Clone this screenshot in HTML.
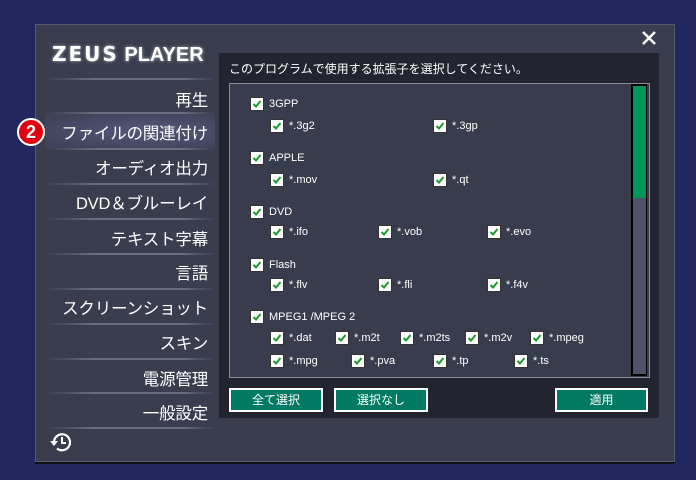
<html><head><style>
body{margin:0;width:696px;height:480px;background:#20285f;position:relative;overflow:hidden;font-family:"Liberation Sans","Noto Sans CJK JP",sans-serif;color:#fff}
.win{position:absolute;left:35px;top:24px;width:638px;height:436px;background:#3a3d4e;border:1px solid #555a70;box-shadow:0 2px 0 #111}
.logo{position:absolute;left:52px;top:42px;font-size:20px;font-weight:bold;letter-spacing:0px;text-shadow:0 0 3px rgba(255,255,255,.6);white-space:nowrap}
.logo b{letter-spacing:2px;font-family:"DejaVu Sans",sans-serif;font-weight:900}
.menu{position:absolute;left:45px;width:170px;text-align:right;font-size:16.5px;letter-spacing:-0.2px;padding-right:7px;box-sizing:border-box}
.sep{position:absolute;left:45px;width:170px;height:2px;background:linear-gradient(90deg,#3a3d4e,#6a6d80 30%,#6a6d80 80%,#3a3d4e)}
.hl{position:absolute;left:45px;top:114px;width:170px;height:35px;background:radial-gradient(ellipse at 60% 50%,#55597a,#40435a 80%)}
.badge{position:absolute;left:17px;top:118px;width:24px;height:24px;border-radius:50%;background:#e00010;border:2px solid #fff;font-weight:bold;font-size:18px;text-align:center;line-height:24px}
.rp{position:absolute;left:219px;top:53px;width:440px;height:365px;background:#22252f}
.box{position:absolute;left:229px;top:83px;width:419px;height:293px;background:#393c4c;border:1px solid #8a8d99}
.cb{position:absolute;width:12px;height:12px;background:#fff;border:1px solid #333}
.cb svg{position:absolute;left:1px;top:1px}
.lb{position:absolute;font-size:11px;line-height:12px}
.btn{position:absolute;top:388px;height:20px;background:#007a63;border:2px solid #fff;font-size:12px;text-align:center;line-height:20px}
</style></head><body>
<div class="win"></div>
<div class="logo"><b>ZEUS</b> PLAYER</div>
<div class="hl"></div>
<div class="sep" style="top:78px"></div>
<div class="menu" style="top:87px">再生</div>
<div class="sep" style="top:112px"></div>
<div class="menu" style="top:120px">ファイルの関連付け</div>
<div class="sep" style="top:148px"></div>
<div class="menu" style="top:155px">オーディオ出力</div>
<div class="sep" style="top:183px"></div>
<div class="menu" style="top:190px">DVD＆ブルーレイ</div>
<div class="sep" style="top:218px"></div>
<div class="menu" style="top:226px">テキスト字幕</div>
<div class="sep" style="top:253px"></div>
<div class="menu" style="top:260px">言語</div>
<div class="sep" style="top:288px"></div>
<div class="menu" style="top:295px">スクリーンショット</div>
<div class="sep" style="top:323px"></div>
<div class="menu" style="top:330px">スキン</div>
<div class="sep" style="top:358px"></div>
<div class="menu" style="top:366px">電源管理</div>
<div class="sep" style="top:392px"></div>
<div class="menu" style="top:400px">一般設定</div>
<div class="sep" style="top:427px"></div>
<div class="badge">2</div>
<svg style="position:absolute;left:48px;top:430px" width="26" height="24" viewBox="0 0 26 24"><path d="M6 12 A8 8 0 1 1 9 18.5" fill="none" stroke="#fff" stroke-width="2.2"/><path d="M2 11 L6 16 L10 11Z" fill="#fff"/><path d="M14 7 V13 H18" fill="none" stroke="#fff" stroke-width="2"/></svg>
<svg style="position:absolute;left:641px;top:30px" width="16" height="16"><path d="M2 2L14 14M14 2L2 14" stroke="#fff" stroke-width="2.5"/></svg>
<div class="rp"></div>
<div style="position:absolute;left:229px;top:60px;font-size:12px">このプログラムで使用する拡張子を選択してください。</div>
<div class="box"></div>
<div style="position:absolute;left:631px;top:84px;width:16px;height:292px;background:#000"></div>
<div style="position:absolute;left:633px;top:86px;width:13px;height:288px;background:#4f5268"></div>
<div style="position:absolute;left:633px;top:86px;width:13px;height:112px;background:#00995a"></div>
<div id="items"></div>
<div class="btn" style="left:229px;width:90px">全て選択</div>
<div class="btn" style="left:334px;width:90px">選択なし</div>
<div class="btn" style="left:555px;width:89px">適用</div>
<script>
var it=[[250,104,"3GPP"],[270,126,"*.3g2"],[433,126,"*.3gp"],[250,158,"APPLE"],[270,180,"*.mov"],[433,180,"*.qt"],[250,212,"DVD"],[270,232,"*.ifo"],[378,232,"*.vob"],[487,232,"*.evo"],[250,265,"Flash"],[270,285,"*.flv"],[378,285,"*.fli"],[487,285,"*.f4v"],[250,317,"MPEG1 /MPEG 2"],[270,338,"*.dat"],[335,338,"*.m2t"],[400,338,"*.m2ts"],[465,338,"*.m2v"],[530,338,"*.mpeg"],[270,361,"*.mpg"],[351,361,"*.pva"],[433,361,"*.tp"],[514,361,"*.ts"]];
var h="";it.forEach(function(a){h+='<div class="cb" style="left:'+a[0]+'px;top:'+(a[1]-7)+'px"><svg width="10" height="10"><path d="M1.5 5L4 7.5L8.5 2" fill="none" stroke="#1a9a2a" stroke-width="2"/></svg></div><div class="lb" style="left:'+(a[0]+19)+'px;top:'+(a[1]-6)+'px">'+a[2]+'</div>';});
document.getElementById("items").innerHTML=h;
</script>
</body></html>
